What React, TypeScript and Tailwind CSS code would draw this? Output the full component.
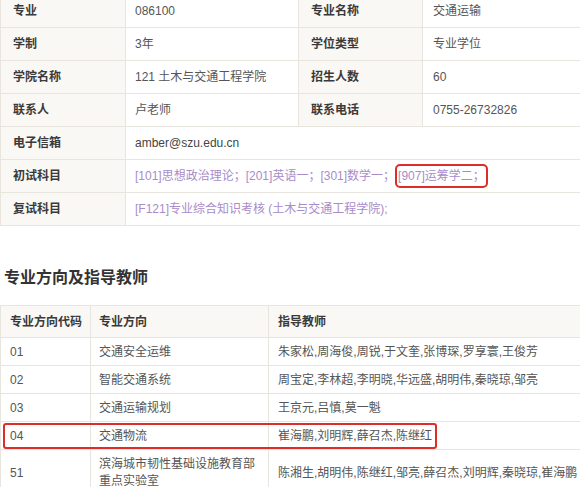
const font = { fontFamily: '"Liberation Sans", "Noto Sans CJK SC", sans-serif' };

const infoRows: [string, string, string, string][] = [
  ['专业', '086100', '专业名称', '交通运输'],
  ['学制', '3年', '学位类型', '专业学位'],
  ['学院名称', '121 土木与交通工程学院', '招生人数', '60'],
  ['联系人', '卢老师', '联系电话', '0755-26732826'],
];

const directions = [
  { code: '01', name: '交通安全运维', teachers: '朱家松,周海俊,周锐,于文奎,张博琛,罗享寰,王俊芳' },
  { code: '02', name: '智能交通系统', teachers: '周宝定,李林超,李明晓,华远盛,胡明伟,秦晓琼,邹亮' },
  { code: '03', name: '交通运输规划', teachers: '王京元,吕慎,莫一魁' },
];

const App = () => {
  return (
    <div className="w-[580px] h-[487px] overflow-hidden bg-white text-[12px] text-[#555]" style={font}>
      {/* 招生信息 */}
      <div className="-mt-[5px] w-[582px] border-l border-[#e8e4de]">
        {infoRows.map((r) => (
          <div key={r[0]} className="grid grid-cols-[125px_173px_124px_1fr] h-[33px] border-b border-[#e8e4de]">
            <div className="flex items-center pl-3 bg-[#faf8f4] border-r border-[#e8e4de] font-bold text-[#3a3a3a]">{r[0]}</div>
            <div className="flex items-center pl-[9px] border-r border-[#e8e4de]">{r[1]}</div>
            <div className="flex items-center pl-3 bg-[#faf8f4] border-r border-[#e8e4de] font-bold text-[#3a3a3a]">{r[2]}</div>
            <div className="flex items-center pl-[10px]">{r[3]}</div>
          </div>
        ))}
        <div className="grid grid-cols-[125px_1fr] h-[33px] border-b border-[#e8e4de]">
          <div className="flex items-center pl-3 bg-[#faf8f4] border-r border-[#e8e4de] font-bold text-[#3a3a3a]">电子信箱</div>
          <div className="flex items-center pl-[9px] text-[#444]">amber@szu.edu.cn</div>
        </div>
        <div className="grid grid-cols-[125px_1fr] h-[33px] border-b border-[#e8e4de]">
          <div className="flex items-center pl-3 bg-[#faf8f4] border-r border-[#e8e4de] font-bold text-[#3a3a3a]">初试科目</div>
          <div className="flex items-center pl-[9px] text-[#a98cc9] whitespace-nowrap">
            [101]思想政治理论；[201]英语一；[301]数学一；
            <span className="ml-[3px] leading-[18px] rounded-[2px] outline-2 outline-[#de2d26] outline-offset-[1px]">[907]运筹学二；</span>
          </div>
        </div>
        <div className="grid grid-cols-[125px_1fr] h-[33px] border-b border-[#e8e4de]">
          <div className="flex items-center pl-3 bg-[#faf8f4] border-r border-[#e8e4de] font-bold text-[#3a3a3a]">复试科目</div>
          <div className="flex items-center pl-[9px] text-[#a98cc9]">[F121]专业综合知识考核 (土木与交通工程学院);</div>
        </div>
      </div>

      <h2 className="mt-[42px] pl-1 text-[16px] leading-[20px] font-bold text-[#333]">专业方向及指导教师</h2>

      {/* 专业方向 */}
      <div className="mt-[17px] w-[582px] border-l border-t border-[#e8e4de]">
        <div className="grid grid-cols-[90px_178px_1fr] h-[32px] bg-[#faf8f4] border-b border-[#e8e4de] font-bold text-[#3a3a3a]">
          <div className="flex items-center pl-[9px] border-r border-[#e8e4de]">专业方向代码</div>
          <div className="flex items-center pl-[8px] border-r border-[#e8e4de]">专业方向</div>
          <div className="flex items-center pl-[9px]">指导教师</div>
        </div>
        {directions.map((d) => (
          <div key={d.code} className="grid grid-cols-[90px_178px_1fr] h-[28px] border-b border-[#e8e4de]">
            <div className="flex items-center pl-[9px] border-r border-[#e8e4de]">{d.code}</div>
            <div className="flex items-center pl-[8px] border-r border-[#e8e4de]">{d.name}</div>
            <div className="flex items-center pl-[9px] whitespace-nowrap">{d.teachers}</div>
          </div>
        ))}
        <div className="relative grid grid-cols-[90px_178px_1fr] h-[28px] border-b border-[#e8e4de]">
          <div className="flex items-center pl-[9px] border-r border-[#e8e4de]">04</div>
          <div className="flex items-center pl-[8px] border-r border-[#e8e4de]">交通物流</div>
          <div className="flex items-center pl-[9px]">崔海鹏,刘明辉,薛召杰,陈继红</div>
          <div className="absolute left-[2px] top-[1px] w-[434px] h-[26px] border-2 border-[#de2d26] rounded-[3px]" />
        </div>
        <div className="grid grid-cols-[90px_178px_1fr] border-b border-[#e8e4de]">
          <div className="flex items-center pl-[9px] border-r border-[#e8e4de]">51</div>
          <div className="flex items-center pl-[8px] py-[6px] leading-[17px] border-r border-[#e8e4de]">
            滨海城市韧性基础设施教育部
            <br />
            重点实验室
          </div>
          <div className="flex items-center pl-[9px] whitespace-nowrap overflow-hidden">
            陈湘生,胡明伟,陈继红,邹亮,薛召杰,刘明辉,秦晓琼,崔海鹏
          </div>
        </div>
      </div>
    </div>
  );
};

export default App;
